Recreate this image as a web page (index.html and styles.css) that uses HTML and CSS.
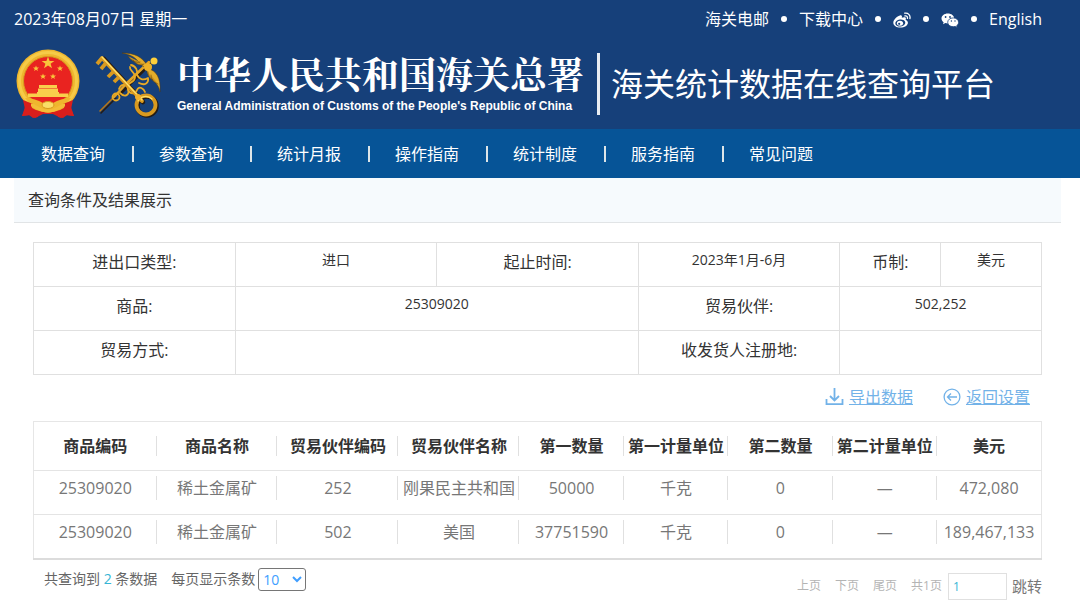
FILE: index.html
```html
<!DOCTYPE html>
<html lang="zh-CN">
<head>
<meta charset="utf-8">
<title>海关统计数据在线查询平台</title>
<link rel="stylesheet" href="styles.css">
</head>
<body>
<header class="header">
  <div class="topbar">
    <span>2023年08月07日 星期一</span>
    <nav class="toplinks" aria-label="快捷链接">
      <a href="#">海关电邮</a><i class="dot"></i>
      <a href="#">下载中心</a><i class="dot"></i>
      <a href="#" aria-label="微博"><svg width="18" height="18" viewBox="0 -2 18 18"><path fill="#fff" d="M7.400 3.200C4.500 3.900.300 7.500.300 10.700c0 3 3.400 4.900 7 4.900 4.400 0 7.600-2.400 7.600-4.900 0-1.600-1.200-2.300-2.300-2.700.5-1.200.4-2-.1-2.400-.8-.7-2.300-.5-3.700.1.4-1.500.2-2.700-1.400-2.500z"/><ellipse cx="7.300" cy="11" rx="5" ry="3.500" fill="#16407a" transform="rotate(-8 7.300 11)"/><ellipse cx="7" cy="11.300" rx="3.100" ry="2.500" fill="#fff"/><circle cx="6.200" cy="11.800" r="1.100" fill="#16407a"/><path d="M11.700 1.200c3.300-.7 6 2 5.200 5.300M11.900 3.900c1.700-.4 2.900.8 2.500 2.400" fill="none" stroke="#fff" stroke-width="1.300" stroke-linecap="round"/></svg></a><i class="dot"></i>
      <a href="#" aria-label="微信"><svg width="18" height="17" viewBox="0 -2 18 17"><path fill="#fff" d="M6.800.500C3.200.500.500 2.700.500 5.500c0 1.500.8 2.900 2.100 3.800L2 11.300l2.400-1.200c.8.300 1.600.4 2.400.4 3.600 0 6.400-2.200 6.400-5S10.400.500 6.800.500z"/><path fill="#fff" stroke="#16407a" stroke-width=".8" d="M12.200 4.900c-3.200 0-5.500 2-5.500 4.400s2.300 4.400 5.500 4.400c.7 0 1.400-.1 2-.3l2 1-.5-1.700c1.200-.8 1.900-2 1.900-3.400 0-2.400-2.300-4.400-5.400-4.400z"/><g fill="#16407a"><circle cx="4.600" cy="4" r=".9"/><circle cx="9" cy="4" r=".9"/><circle cx="10.400" cy="8" r=".7"/><circle cx="14" cy="8" r=".7"/></g></svg></a><i class="dot"></i>
      <a href="#">English</a>
    </nav>
  </div>
  <div class="brand">
    <svg class="emblem" width="66" height="70" viewBox="0 0 66 70">
      <path fill="#d91e1c" d="M9 48l15 7h18l15-7-1 10 3 9-9-1-4 3-8-4H28l-8 4-4-3-9 1 3-9z"/>
      <circle cx="33" cy="32" r="31.500" fill="#efb62e"/>
      <circle cx="33" cy="32" r="28.500" fill="none" stroke="#f6cb48" stroke-width="3"/>
      <circle cx="33" cy="32" r="24.500" fill="#e92320" stroke="#d79a20"/>
      <g fill="#f9c43b"><path d="M33 7.500l1.600 4.400h4.800l-3.800 2.800 1.400 4.500-4-2.700-4 2.700 1.400-4.500-3.800-2.800h4.800z"/>
      <path id="star" d="M21 16.500l.8 2h2.200l-1.700 1.400.6 2.100-1.900-1.200-1.900 1.200.6-2.100-1.700-1.400h2.200z"/><use href="#star" x="24"/><use href="#star" x="7" y="8"/><use href="#star" x="17" y="8"/></g>
      <path fill="#f9cf4b" d="M24 36h18v3H24zM23 39.500h20V43h1v1.500h9V48H13v-3.500h9V43h1z"/>
      <path fill="#efb62e" d="M10 49c7 0 13 2 18 5 3-2 7-2 10 0 5-3 11-5 18-5l-7 8c-4 0-8 2-10 5-4 2-8 2-12 0-2-3-6-5-10-5z"/>
      <path fill="#d91e1c" d="M8 51l10 4-2 6 8 1-1 6-5 1-4-3-7 1 3-7zM58 51l-10 4 2 6-8 1 1 6 5 1 4-3 7 1-3-7z"/>
      <path d="M16 56c5 0 7 6 17 6s12-6 17-6" fill="none" stroke="#f3bd38" stroke-width="3"/>
      <ellipse cx="33" cy="56" rx="6" ry="3.500" fill="#fadd67" stroke="#d69a20"/>
    </svg>
    <svg class="keys" width="68" height="70" viewBox="0 0 68 70" fill="none" stroke-linecap="round" stroke-linejoin="round">
      <g stroke="#251b14" transform="translate(1 1)"><path stroke-width="4.500" d="M8 9l39 43"/><circle cx="51" cy="56" r="9.500" stroke-width="4.500"/><path stroke-width="1.500" d="M5 63l15-15"/><path stroke-width="3" d="M23 45l31-31"/></g>
      <path stroke="#bb7715" stroke-width="1.500" d="M5 62l14-14"/>
      <path stroke="#e4a526" stroke-width="2.500" d="M19 48l13-14 22-21"/>
      <g stroke="#e9aa25" stroke-width="1.800"><circle cx="21" cy="48" r="3.500"/><path d="M24 40c2-6 8-5 9 0s7 6 9 1 7-1 8 2"/><path d="M25 44c5 5 10 2 8-4-2-8 7-5 7-12 0-6-6-6-5-10"/><path d="M36 16c5 1 7 6 6 10 2 4 6 6 11 3 1 5-3 8-9 5"/></g>
      <g stroke="#53380f" stroke-width=".5">
        <path fill="#e3ac2a" d="M52 16c-5-8-12-12-25-12 6 1 11 3 14 6 4 4 6 8 11 9z"/>
        <path fill="#c99320" d="M33 7c4 6 9 7 12 6M38 11c3 5 8 6 11 4"/>
        <path fill="#e3ac2a" d="M54 20c7 2 12 8 11 23-1-6-4-9-7-12-3-2-6-6-6-9z"/>
        <path fill="#c99320" d="M63 35c-5-2-7-5-7-9M58 31c-4-2-5-5-5-8"/>
      </g>
      <circle cx="59" cy="12" r="3.500" fill="#ffcf3a"/><circle cx="53" cy="18" r="4" fill="#efb329"/>
      <g stroke="#d99a20" stroke-width="3.800"><path d="M7 9l40 43"/><path stroke-linecap="butt" d="M7 9l-5 6M11 14l-5 6M19 22l-6 6M24 28l-5 5"/><circle cx="51" cy="56" r="9.500"/></g>
      <path stroke="#ffe06a" stroke-width="1.300" d="M7 8l40 43M43 52c2-5 10-6 14-2"/>
      <circle cx="43" cy="48" r="3" fill="#f0b12c"/>
    </svg>
    <div class="agency">
      <div class="agency-cn">中华人民共和国海关总署</div>
      <div class="agency-en">General Administration of Customs of the People's Republic of China</div>
    </div>
    <h1 class="platform">海关统计数据在线查询平台</h1>
  </div>
</header>
<nav class="mainnav" aria-label="主导航">
  <a href="#">数据查询</a><a href="#">参数查询</a><a href="#">统计月报</a><a href="#">操作指南</a><a href="#">统计制度</a><a href="#">服务指南</a><a href="#">常见问题</a>
</nav>
<main class="main">
  <h2 class="section-title">查询条件及结果展示</h2>
  <div class="content">
    <table class="conditions">
      <colgroup><col class="wide"><col class="wide"><col class="wide"><col class="wide"><col><col></colgroup>
      <tbody>
      <tr><th scope="row">进出口类型:</th><td>进口</td><th scope="row">起止时间:</th><td>2023年1月-6月</td><th scope="row">币制:</th><td>美元</td></tr>
      <tr><th scope="row">商品:</th><td colspan="2">25309020</td><th scope="row">贸易伙伴:</th><td colspan="2">502,252</td></tr>
      <tr><th scope="row">贸易方式:</th><td colspan="2"></td><th scope="row">收发货人注册地:</th><td colspan="2"></td></tr>
      </tbody>
    </table>
    <div class="actions">
      <a href="#"><svg width="19" height="18" viewBox="0 0 19 18" fill="none" stroke="#72b2e8" stroke-width="1.800"><path d="M1.500 11v5.200h16V11M9.500 0v12M5 8l4.500 4.500L14 8"/></svg><span>导出数据</span></a>
      <a href="#"><svg width="18" height="18" viewBox="0 0 18 18" fill="none" stroke="#72b2e8" stroke-width="1.300"><circle cx="9" cy="9" r="7.900"/><path d="M14 9H4.500M8 5.500L4.500 9 8 12.500"/></svg><span>返回设置</span></a>
    </div>
    <table class="results">
      <colgroup><col class="first"><col class="c12"><col class="c12"><col class="c12"><col><col><col><col><col></colgroup>
      <thead><tr><th>商品编码</th><th>商品名称</th><th>贸易伙伴编码</th><th>贸易伙伴名称</th><th>第一数量</th><th>第一计量单位</th><th>第二数量</th><th>第二计量单位</th><th>美元</th></tr></thead>
      <tbody>
      <tr><td>25309020</td><td>稀土金属矿</td><td>252</td><td>刚果民主共和国</td><td>50000</td><td>千克</td><td>0</td><td>—</td><td>472,080</td></tr>
      <tr><td>25309020</td><td>稀土金属矿</td><td>502</td><td>美国</td><td>37751590</td><td>千克</td><td>0</td><td>—</td><td>189,467,133</td></tr>
      </tbody>
    </table>
    <div class="footer">
      <div class="count">
        <span>共查询到 <b>2</b> 条数据</span>
        <label for="size">每页显示条数</label>
        <select id="size"><option>10</option><option>20</option></select>
      </div>
      <div class="pager">
        <a href="#">上页</a><a href="#">下页</a><a href="#">尾页</a><span>共1页</span>
        <input type="text" value="1" aria-label="页码">
        <button type="button">跳转</button>
      </div>
    </div>
  </div>
</main>
</body>
</html>
```
FILE: styles.css
```css
* { box-sizing: border-box; }
body {
  margin: 0;
  background: #fff;
  color: #333;
  font: 16px/24px "Open Sans", "Noto Sans CJK SC", sans-serif;
}
a { color: inherit; text-decoration: none; }
svg { display: block; flex: none; }
table { width: 100%; table-layout: fixed; border-collapse: collapse; }

.header { background: #16407a; color: #fff; padding-bottom: 5px; }
.topbar {
  display: flex;
  justify-content: space-between;
  padding: 7px 38px 13px 14px;
}
.toplinks { display: flex; align-items: center; gap: 12px; }
.dot { width: 6px; height: 6px; border-radius: 50%; background: #fff; }

.brand { display: flex; align-items: center; height: 80px; padding-left: 15px; white-space: nowrap; }
.keys { margin-left: 14px; }
.agency { margin-left: 14px; padding: 0 13px 4px 0; }
.agency-cn { font-size: 37px; line-height: 48px; font-weight: 700; font-family: "Noto Serif CJK SC", "Noto Sans CJK SC", serif; }
.agency-en { font: 700 12px/18px "Liberation Sans", Arial, sans-serif; }
.platform {
  margin: 0;
  padding-left: 11px;
  border-left: 3px solid #e8edf3;
  font-size: 32px;
  line-height: 62px;
  font-weight: 400;
}

.mainnav {
  display: flex;
  align-items: center;
  height: 49px;
  padding-left: 41px;
  background: #065497;
  color: #fff;
}
.mainnav a { line-height: 16px; white-space: nowrap; }
.mainnav a + a { margin-left: 27px; padding-left: 25px; border-left: 2px solid #dde5e8; }

.main { padding: 0 19px 0 14px; }
.section-title {
  margin: 0;
  padding: 10px 14px;
  background: #f6fafd;
  border-bottom: 1px solid #e1e4e6;
  font-size: 16px;
  font-weight: 400;
}
.content { padding: 19px 19px 0; }

.conditions col { width: 10%; }
.conditions .wide { width: 20%; }
.conditions th, .conditions td {
  height: 44px;
  padding: 7px 0 0;
  border: 1px solid #e0e0e0;
  text-align: center;
  vertical-align: top;
  font-weight: 400;
}
.conditions td { padding-top: 5px; font-size: 14px; }

.actions {
  display: flex;
  justify-content: flex-end;
  gap: 30px;
  padding: 10px 12px 12px;
  color: #72b2e8;
}
.actions a { display: flex; align-items: center; gap: 5px; text-decoration: underline; }

.results { border: 1px solid #e6e6e6; border-bottom: 2px solid #dcdcdc; }
.results .first { width: 123px; }
.results .c12 { width: 12%; }
.results th, .results td {
  padding: 5px 0 14px;
  border-bottom: 1px solid #e4e4e4;
  line-height: 25px;
  text-align: center;
  white-space: nowrap;
  color: #777;
  background: linear-gradient(#e0e0e0, #e0e0e0) right 5px / 1px 24px no-repeat;
}
.results td { line-height: 24px; }
.results th {
  padding: 12px 0 11px;
  color: #333;
  font-weight: 700;
  background-position: right 14px;
  background-size: 1px 20px;
}
.results th:last-child, .results td:last-child { background: none; }

.footer { display: flex; justify-content: space-between; font-size: 14px; color: #666; }
.count { display: flex; align-items: center; height: 38px; padding-left: 11px; }
.count b { color: #35b5d5; font-weight: 400; }
.count label { margin: 0 3px 0 14px; }
.count select {
  width: 48px;
  height: 23px;
  padding: 0;
  border: 1px solid #767676;
  border-radius: 3px;
  background: #fff;
  color: #409eff;
  font: inherit;
}
.pager { display: flex; align-items: center; height: 52px; color: #b4b4b4; font-size: 12px; }
.pager a { margin-right: 14px; }
.pager input {
  width: 59px;
  height: 27px;
  margin: 0 5px 0 6px;
  padding: 0 4px;
  border: 1px solid #e0e0e0;
  color: #35b5d5;
  font: inherit;
}
.pager button { padding: 0; border: 0; background: none; color: #777; font: inherit; font-size: 15px; }
```
